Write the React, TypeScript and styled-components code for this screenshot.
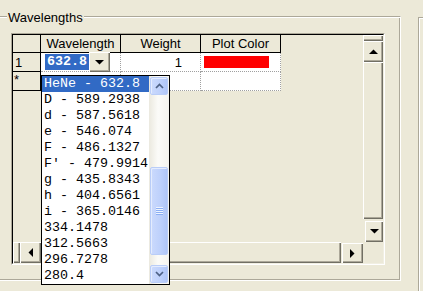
import React from "react";
import styled, { createGlobalStyle } from "styled-components";

const GlobalStyle = createGlobalStyle`
    html, body {
        margin: 0;
        padding: 0;
    }
    body {
        background: #ece9d8;
        font-family: "Liberation Sans", Arial, sans-serif;
        font-size: 13px;
        color: #000;
        overflow: hidden;
    }
`;

const Screen = styled.div`
    position: relative;
    width: 423px;
    height: 291px;
    display: flex;
    align-items: flex-start;
    overflow: hidden;
`;

const Group = styled.div`
    position: relative;
    box-sizing: border-box;
    margin: 16px 0 0 -4px;
    width: 405px;
    height: 265px;
    padding: 16px 0 0 14px;
    border: 1px solid;
    border-color: #aca899 #fff #fff #aca899;
    box-shadow: inset 1px 1px #fff, inset -1px -1px #aca899;
`;

const Legend = styled.span`
    position: absolute;
    top: -7px;
    left: 10px;
    padding: 0 1px;
    line-height: 15px;
    background: #ece9d8;
`;

const NextPanel = styled.div`
    flex: 1;
    align-self: stretch;
    margin: 17px 0 0 17px;
    border-top: 1px solid #aca899;
    border-left: 1px solid #aca899;
    box-shadow: inset 1px 1px #fff;
`;

const Frame = styled.div`
    box-sizing: border-box;
    width: 374px;
    height: 232px;
    border: 1px solid;
    border-color: #aca899 #fff #fff #aca899;
`;

const FrameInner = styled.div`
    box-sizing: border-box;
    height: 100%;
    border: 1px solid;
    border-color: #000 #f1efe2 #f1efe2 #000;
    display: grid;
    grid-template-columns: 350px 20px;
    grid-template-rows: 207px 21px;
`;

const TableArea = styled.div`
    background: #ece9d8;
`;

const Table = styled.div`
    display: grid;
    grid-template-columns: 28px 80px 80px 80px;
    grid-template-rows: 18px 19px 19px;
`;

const HeaderCell = styled.div`
    box-sizing: border-box;
    display: flex;
    align-items: center;
    justify-content: center;
    border-right: 1px solid #000;
    border-bottom: 1px solid #000;
    white-space: nowrap;
`;

const RowHead = styled.div<{ $top?: boolean }>`
    box-sizing: border-box;
    display: flex;
    align-items: ${(p) => (p.$top ? "flex-start" : "center")};
    padding-left: ${(p) => (p.$top ? "1px" : "2px")};
    line-height: 15px;
    border-right: 1px solid #000;
    border-bottom: 1px solid #000;
`;

const Cell = styled.div<{ $align?: "left" | "right" }>`
    box-sizing: border-box;
    display: flex;
    align-items: center;
    justify-content: ${(p) => (p.$align === "right" ? "flex-end" : "flex-start")};
    padding: ${(p) => (p.$align === "right" ? "0 18px 0 0" : "0 0 0 3px")};
    background: #fff;
    border-right: 1px dotted #a0a0a0;
    border-bottom: 1px dotted #a0a0a0;
`;

const EditorCell = styled(Cell)`
    padding-left: 4px;
    align-items: flex-start;
`;

const Selection = styled.div`
    flex: none;
    box-sizing: border-box;
    width: 44px;
    margin-top: 1px;
    height: 16px;
    padding: 0 2px;
    background: #316ac5;
    color: #fff;
    font-family: "Liberation Mono", "Courier New", monospace;
    font-weight: bold;
    font-size: 13.33px;
    line-height: 16px;
    white-space: nowrap;
`;

const Swatch = styled.div<{ $color: string }>`
    width: 65px;
    height: 12px;
    background: ${(p) => p.$color};
`;

const Raised = styled.div<{ $w?: number; $h?: number; $grow?: boolean; $gap?: number; $lift?: number }>`
    box-sizing: border-box;
    flex: ${(p) => (p.$grow ? "1" : "none")};
    width: ${(p) => (p.$w ? `${p.$w}px` : "auto")};
    height: ${(p) => (p.$h ? `${p.$h}px` : "auto")};
    margin: ${(p) => `${p.$gap || 0}px 0 0 ${p.$gap || 0}px`};
    transform: translateY(${(p) => -(p.$lift || 0)}px);
    display: flex;
    align-items: center;
    justify-content: center;
    background: #ece9d8;
    box-shadow: inset 1px 1px #fff, inset -1px -1px #716f64, inset -2px -2px #aca899;
`;

const VScroll = styled.div`
    display: flex;
    flex-direction: column;
`;

const HScroll = styled.div`
    display: flex;
`;

const Corner = styled.div`
    background: #ece9d8;
`;

const List = styled.div`
    position: absolute;
    left: 41px;
    top: 75px;
    box-sizing: border-box;
    width: 129px;
    height: 210px;
    border: 1px solid #000;
    background: #fff;
    display: flex;
`;

const Items = styled.div`
    width: 107px;
    display: flex;
    flex-direction: column;
`;

const Item = styled.div<{ $selected?: boolean }>`
    height: 16px;
    padding-left: 2px;
    font-family: "Liberation Mono", "Courier New", monospace;
    font-size: 13.33px;
    line-height: 16px;
    white-space: pre;
    overflow: hidden;
    background: ${(p) => (p.$selected ? "#316ac5" : "#fff")};
    color: ${(p) => (p.$selected ? "#fff" : "#000")};
`;

const LunaTrack = styled.div`
    width: 20px;
    box-sizing: border-box;
    padding: 1px;
    display: flex;
    flex-direction: column;
    background: linear-gradient(to right, #ebe9df, #fbfbf8 45%, #f4f3ee);
`;

const LunaButton = styled.div<{ $h: number; $gap?: number; $end?: boolean }>`
    box-sizing: border-box;
    height: ${(p) => p.$h}px;
    margin-top: ${(p) => (p.$end ? "auto" : `${p.$gap || 0}px`)};
    display: flex;
    align-items: center;
    justify-content: center;
    border: 1px solid #b9cdf8;
    border-radius: 2px;
    background: linear-gradient(to right, #cbdafd, #bdd0fb 60%, #afc5f7);
    box-shadow: inset 1px 1px #e4ecfe;
`;

const Grip = styled.div`
    width: 7px;
    height: 8px;
    background: repeating-linear-gradient(to bottom, #eef4fe 0 1px, #8caff4 1px 2px);
`;

const Triangle: React.FC<{ dir: "up" | "down" | "left" | "right" }> = ({ dir }) => {
    const pts = {
        up: "0,5 9,5 4.5,0.5",
        down: "0,0 9,0 4.5,4.5",
        left: "5,0 5,9 0.5,4.5",
        right: "0,0 0,9 4.5,4.5",
    }[dir];
    const vertical = dir === "up" || dir === "down";
    return (
        <svg width={vertical ? 9 : 5} height={vertical ? 5 : 9} viewBox={vertical ? "0 0 9 5" : "0 0 5 9"}>
            <polygon points={pts} fill="#000" />
        </svg>
    );
};

const Chevron: React.FC<{ dir: "up" | "down" }> = ({ dir }) => (
    <svg width="9" height="6" viewBox="0 0 9 6">
        <polyline
            points={dir === "up" ? "1,5 4.5,1.5 8,5" : "1,1 4.5,4.5 8,1"}
            fill="none"
            stroke="#4d6185"
            strokeWidth="1.7"
        />
    </svg>
);

const options = [
    "HeNe - 632.8",
    "D - 589.2938",
    "d - 587.5618",
    "e - 546.074",
    "F - 486.1327",
    "F' - 479.9914",
    "g - 435.8343",
    "h - 404.6561",
    "i - 365.0146",
    "334.1478",
    "312.5663",
    "296.7278",
    "280.4",
];

const App: React.FC = () => {
    return (
        <>
            <GlobalStyle />
            <Screen>
                <Group>
                    <Legend>Wavelengths</Legend>
                    <Frame>
                        <FrameInner>
                            <TableArea>
                                <Table>
                                    <HeaderCell />
                                    <HeaderCell>Wavelength</HeaderCell>
                                    <HeaderCell>Weight</HeaderCell>
                                    <HeaderCell>Plot Color</HeaderCell>

                                    <RowHead>1</RowHead>
                                    <EditorCell>
                                        <Selection>632.8</Selection>
                                        <Raised $w={21} $h={20} $lift={1}>
                                            <Triangle dir="down" />
                                        </Raised>
                                    </EditorCell>
                                    <Cell $align="right">1</Cell>
                                    <Cell>
                                        <Swatch $color="#ff0000" />
                                    </Cell>

                                    <RowHead $top>*</RowHead>
                                    <Cell />
                                    <Cell />
                                    <Cell />
                                </Table>
                            </TableArea>
                            <VScroll>
                                <Raised $h={6} />
                                <Raised $h={21}>
                                    <Triangle dir="up" />
                                </Raised>
                                <Raised $grow />
                                <Raised $h={21} $gap={2}>
                                    <Triangle dir="down" />
                                </Raised>
                            </VScroll>
                            <HScroll>
                                <Raised $w={7} />
                                <Raised $w={21}>
                                    <Triangle dir="left" />
                                </Raised>
                                <Raised $grow />
                                <Raised $w={21} $gap={1}>
                                    <Triangle dir="right" />
                                </Raised>
                            </HScroll>
                            <Corner />
                        </FrameInner>
                    </Frame>
                </Group>
                <NextPanel />
                <List>
                    <Items>
                        {options.map((o, i) => (
                            <Item key={o} $selected={i === 0}>
                                {o}
                            </Item>
                        ))}
                    </Items>
                    <LunaTrack>
                        <LunaButton $h={18}>
                            <Chevron dir="up" />
                        </LunaButton>
                        <LunaButton $h={88} $gap={72}>
                            <Grip />
                        </LunaButton>
                        <LunaButton $h={18} $end>
                            <Chevron dir="down" />
                        </LunaButton>
                    </LunaTrack>
                </List>
            </Screen>
        </>
    );
};

export default App;
